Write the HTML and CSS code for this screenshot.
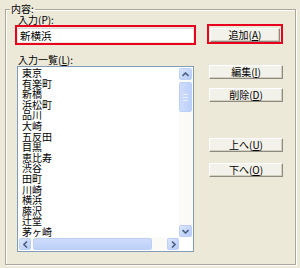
FILE: index.html
```html
<!DOCTYPE html>
<html lang="ja">
<head>
    <meta charset="UTF-8">
    <title>内容</title>
    <link rel="stylesheet" href="styles.css">
</head>
<body>

<fieldset class="group">
    <legend class="group-title">内容:</legend>
    <div class="cols">
        <div class="left">
            <label class="cap" for="entry">入力(<u>P</u>):</label>
            <div class="mark">
                <div class="field" id="entry">新横浜</div>
            </div>

            <label class="cap cap-list">入力一覧(<u>L</u>):</label>
            <div class="listbox">
                <ul class="items">
                    <li>東京</li>
                    <li>有楽町</li>
                    <li>新橋</li>
                    <li>浜松町</li>
                    <li>品川</li>
                    <li>大崎</li>
                    <li>五反田</li>
                    <li>目黒</li>
                    <li>恵比寿</li>
                    <li>渋谷</li>
                    <li>田町</li>
                    <li>川崎</li>
                    <li>横浜</li>
                    <li>藤沢</li>
                    <li>辻堂</li>
                    <li>茅ヶ崎</li>
                </ul>

                <!-- vertical scrollbar -->
                <div class="vscroll">
                    <div class="arrow">
                        <svg width="7" height="5" viewBox="0 0 7 5"><path d="M0.5 4 L3.5 1 L6.5 4" fill="none" stroke="#4d6185" stroke-width="1.6"/></svg>
                    </div>
                    <div class="vthumb"><span class="grip"></span></div>
                    <div class="track"></div>
                    <div class="arrow">
                        <svg width="7" height="5" viewBox="0 0 7 5"><path d="M0.5 1 L3.5 4 L6.5 1" fill="none" stroke="#4d6185" stroke-width="1.6"/></svg>
                    </div>
                </div>

                <!-- horizontal scrollbar -->
                <div class="hscroll">
                    <div class="arrow">
                        <svg width="5" height="7" viewBox="0 0 5 7"><path d="M4 0.5 L1 3.5 L4 6.5" fill="none" stroke="#4d6185" stroke-width="1.6"/></svg>
                    </div>
                    <div class="hthumb"></div>
                    <div class="track"></div>
                    <div class="arrow">
                        <svg width="5" height="7" viewBox="0 0 5 7"><path d="M1 0.5 L4 3.5 L1 6.5" fill="none" stroke="#4d6185" stroke-width="1.6"/></svg>
                    </div>
                </div>
                <div class="corner"></div>
            </div>
        </div>

        <div class="right">
            <div class="mark mark-btn">
                <button class="btn">追加(<u>A</u>)</button>
            </div>
            <button class="btn btn-side btn-edit">編集(<u>I</u>)</button>
            <button class="btn btn-side btn-del">削除(<u>D</u>)</button>
            <button class="btn btn-side btn-up">上へ(<u>U</u>)</button>
            <button class="btn btn-side btn-down">下へ(<u>O</u>)</button>
        </div>
    </div>
</fieldset>

</body>
</html>
```

FILE: styles.css
```css
  body {
      margin: 0;
      width: 300px;
      height: 268px;
      overflow: hidden;
      background: #ece9d8;
      font-family: "Noto Sans CJK JP", "DejaVu Sans", sans-serif;
      font-size: 10px;
      color: #000;
  }
  .group {
      box-sizing: border-box;
      margin: 4px 4px 0 5px;
      padding: 0 9px;
      height: 261px;
      border: 1px solid #aca899;
      box-shadow: inset 1px 1px 0 #fff, 1px 1px 0 #fff;
      min-inline-size: 0;
  }
  .group-title {
      padding: 0 1px;
      margin-left: -5px;
      line-height: 10px;
  }
  .cols {
      display: flex;
      gap: 11px;
  }
  .left {
      width: 181px;
      display: flex;
      flex-direction: column;
  }
  .cap {
      display: block;
      padding-left: 3px;
      line-height: 11px;
  }
  .cap-list {
      margin-top: 9px;
      line-height: 12px;
  }
  /* red highlight frame */
  .mark {
      border: 2px solid #e8001e;
      padding: 1px;
      height: 14px;
  }
  .field {
      height: 14px;
      background: #fff;
      padding-left: 2px;
      line-height: 13px;
      font-size: 10.5px;
      border-top: 1px solid #d8d8d8;
      box-sizing: border-box;
  }
  .listbox {
      margin: 0 2px;
      height: 186px;
      box-sizing: border-box;
      border: 1px solid #7f9db9;
      padding: 1px;
      background: #fff;
      display: grid;
      grid-template-columns: 1fr 13px;
      grid-template-rows: 1fr 13px;
  }
  .items {
      list-style: none;
      margin: 0;
      padding: 0 0 0 3px;
      overflow: hidden;
      line-height: 10.6px;
  }
  .vscroll {
      display: flex;
      flex-direction: column;
      background: #fbfaf6;
  }
  .hscroll {
      display: flex;
      background: #fbfaf6;
      padding-top: 1px;
  }
  .corner {
      background: #fff;
  }
  .arrow {
      flex: none;
      width: 12px;
      height: 12px;
      box-sizing: border-box;
      border: 1px solid #bcd0f7;
      border-radius: 2px;
      background: linear-gradient(135deg, #dbe6fd, #b7cbf9);
      display: flex;
      align-items: center;
      justify-content: center;
  }
  .vscroll .arrow {
      width: 13px;
  }
  .track {
      flex: 1;
  }
  .vthumb {
      flex: none;
      margin-top: 2px;
      height: 28px;
      border: 1px solid #bcd0f7;
      border-radius: 2px;
      background: linear-gradient(90deg, #cfdcfb, #bcd0fa);
      display: flex;
      align-items: center;
      justify-content: center;
  }
  .grip {
      width: 5px;
      height: 5px;
      border-top: 1px solid #e8eefd;
      border-bottom: 1px solid #e8eefd;
      background: linear-gradient(#e8eefd, #e8eefd) center / 5px 1px no-repeat;
  }
  .hthumb {
      flex: none;
      margin-left: 2px;
      width: 117px;
      border: 1px solid #bcd0f7;
      border-radius: 2px;
      background: linear-gradient(#cfdcfb, #bcd0fa);
  }
  .right {
      width: 76px;
      display: flex;
      flex-direction: column;
      padding-top: 10px;
  }
  .btn {
      font-family: inherit;
      font-size: 10px;
      height: 14px;
      padding: 0;
      line-height: 12px;
      background: #f3f2ea;
      color: #000;
      border: 1px solid;
      border-color: #fff #8d8b80 #8d8b80 #fff;
      box-shadow: inset -1px -1px 0 #d3d0c2;
      border-radius: 1px;
      width: 100%;
  }
  .btn-side {
      margin-left: 2px;
      width: 74px;
  }
  .btn-edit {
      margin-top: 21px;
  }
  .btn-del {
      margin-top: 9px;
  }
  .btn-up {
      margin-top: 36px;
  }
  .btn-down {
      margin-top: 11px;
  }
```
